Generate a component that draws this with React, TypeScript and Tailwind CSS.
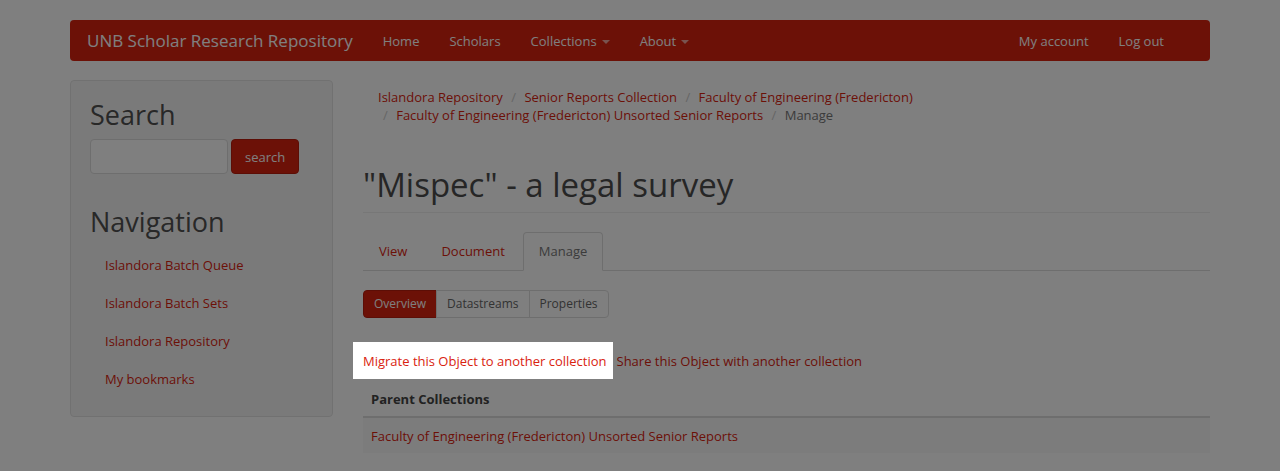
import React, { Fragment } from "react";

const crumbs = [
  "Islandora Repository",
  "Senior Reports Collection",
  "Faculty of Engineering (Fredericton)",
  "Faculty of Engineering (Fredericton) Unsorted Senior Reports",
];

const sideLinks = [
  "Islandora Batch Queue",
  "Islandora Batch Sets",
  "Islandora Repository",
  "My bookmarks",
];

function Caret() {
  return (
    <span className="inline-block w-0 h-0 ml-[5px] align-middle border-t-[4px] border-x-[4px] border-x-transparent border-t-[#ffffff] opacity-60" />
  );
}

export default function App() {
  return (
    <div className="min-h-screen w-full bg-white font-['Open_Sans',sans-serif] text-[13px] leading-[18px] text-[#777]">
      <div className="w-[1140px] mx-auto pt-5">
        {/* Navbar */}
        <nav className="h-[41px] bg-[#d9230f] rounded flex items-center justify-between text-white">
          <div className="flex items-center">
            <a className="pl-[17px] pr-[15px] text-[17px] leading-[20px]">UNB Scholar Research Repository</a>
            <ul className="flex items-center">
              <li><a className="px-[15px]">Home</a></li>
              <li><a className="px-[15px]">Scholars</a></li>
              <li><a className="px-[15px]">Collections<Caret /></a></li>
              <li><a className="px-[15px]">About<Caret /></a></li>
            </ul>
          </div>
          <ul className="flex items-center pr-[31px]">
            <li><a className="px-[15px]">My account</a></li>
            <li><a className="px-[15px]">Log out</a></li>
          </ul>
        </nav>

        <div className="mt-[19px] flex gap-[30px]">
          {/* Sidebar */}
          <aside className="w-[263px] self-start bg-[#f5f5f5] border border-[#e3e3e3] rounded px-[19px] pt-[19px] pb-[18px]">
            <h2 className="text-[27px] leading-[30px] text-[#505050]">Search</h2>
            <div className="mt-[9px] flex">
              <input className="w-[138px] h-[35px] bg-white border border-[#dcdcdc] rounded outline-none" />
              <button className="ml-[3px] h-[35px] px-[13px] bg-[#d9230f] border border-[#b81d0d] rounded text-white text-[13px]">
                search
              </button>
            </div>
            <h2 className="mt-[33px] text-[27px] leading-[30px] text-[#505050]">Navigation</h2>
            <ul className="mt-[9px]">
              {sideLinks.map((l) => (
                <li key={l}>
                  <a className="block px-[15px] py-[10px] leading-[18px] text-[#d9230f]">{l}</a>
                </li>
              ))}
            </ul>
          </aside>

          {/* Main */}
          <main className="flex-1">
            <ol className="py-2 px-[15px] leading-[18px]">
              {crumbs.map((c, i) => (
                <Fragment key={c}>
                  <li className="inline-block">
                    {i > 0 && <span className="px-[5px] text-[#ccc]">/{"\u00a0"}</span>}
                    <a className="text-[#d9230f]">{c}</a>
                  </li>{" "}
                </Fragment>
              ))}
              <li className="inline-block">
                <span className="px-[5px] text-[#ccc]">/{"\u00a0"}</span>
                <span className="text-[#777]">Manage</span>
              </li>
            </ol>

            <h1 className="mt-[33px] text-[33px] leading-[40px] text-[#4d4d4d] pb-[7px] border-b border-[#eee]">
              "Mispec" - a legal survey
            </h1>

            <ul className="mt-[19px] flex border-b border-[#ddd]">
              <li className="-mb-px mr-[2px]">
                <a className="block px-[15px] py-[9px] leading-[19px] border border-transparent rounded-t text-[#d9230f]">View</a>
              </li>
              <li className="-mb-px mr-[2px]">
                <a className="block px-[15px] py-[9px] leading-[19px] border border-transparent rounded-t text-[#d9230f]">Document</a>
              </li>
              <li className="-mb-px mr-[2px]">
                <a className="block px-[15px] py-[9px] leading-[19px] border border-[#ddd] border-b-transparent bg-white rounded-t text-[#777]">Manage</a>
              </li>
            </ul>

            <div className="mt-[19px] flex">
              <a className="px-[10px] py-[4px] text-[12px] leading-[18px] bg-[#d9230f] border border-[#b81d0d] rounded-l text-white">Overview</a>
              <a className="-ml-px px-[10px] py-[4px] text-[12px] leading-[18px] bg-white border border-[#ddd] text-[#666]">Datastreams</a>
              <a className="-ml-px px-[10px] py-[4px] text-[12px] leading-[18px] bg-white border border-[#ddd] rounded-r text-[#666]">Properties</a>
            </div>

            <div className="mt-[24px] flex items-center">
              <a className="relative z-20 bg-white -ml-[10px] pl-[10px] pr-[6px] py-[9.5px] leading-[18px] text-[#d9230f]">
                Migrate this Object to another collection
              </a>
              <a className="ml-[4px] text-[#d9230f]">Share this Object with another collection</a>
            </div>

            <table className="mt-[3px] w-full border-collapse">
              <thead>
                <tr>
                  <th className="text-left px-2 py-2 leading-[18px] font-bold text-[#444] border-b-2 border-[#ddd]">
                    Parent Collections
                  </th>
                </tr>
              </thead>
              <tbody>
                <tr className="bg-[#f9f9f9]">
                  <td className="px-2 pt-[9px] pb-[8px] leading-[18px]">
                    <a className="text-[#d9230f]">Faculty of Engineering (Fredericton) Unsorted Senior Reports</a>
                  </td>
                </tr>
              </tbody>
            </table>
          </main>
        </div>
      </div>

      <div className="fixed inset-0 z-10 bg-[rgba(0,0,0,0.5)]" />
    </div>
  );
}
